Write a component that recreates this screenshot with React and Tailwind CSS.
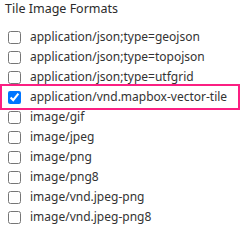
import React from 'react';

const formats = [
  { name: 'application/json;type=geojson' },
  { name: 'application/json;type=topojson' },
  { name: 'application/json;type=utfgrid' },
  { name: 'application/vnd.mapbox-vector-tile', checked: true },
  { name: 'image/gif' },
  { name: 'image/jpeg' },
  { name: 'image/png' },
  { name: 'image/png8' },
  { name: 'image/vnd.jpeg-png' },
  { name: 'image/vnd.jpeg-png8' },
];

const App = () => {
  return (
    <div className="w-[250px] h-[240px] bg-white text-[#333333] text-[12px] font-['Noto_Sans',sans-serif] overflow-hidden">
      {/* Title */}
      <div className="pl-[5px] pt-[1px] h-[27px] leading-[16px] text-[12.5px] text-[#2b2b2b]">Tile Image Formats</div>

      {/* Format list */}
      <div className="flex flex-col">
        {formats.map((f) => (
          <label
            key={f.name}
            className={
              f.checked
                ? 'flex items-center h-[26px] -my-[3px] w-[240px] border-2 border-[#fb1f82] pl-[6px]'
                : 'flex items-center h-[20px] pl-[8px]'
            }
          >
            <input type="checkbox" defaultChecked={f.checked} className="m-0 w-[13px] h-[13px]" />
            <span className="ml-[9px] leading-[16px]">{f.name}</span>
          </label>
        ))}
      </div>
    </div>
  );
};

export default App;
